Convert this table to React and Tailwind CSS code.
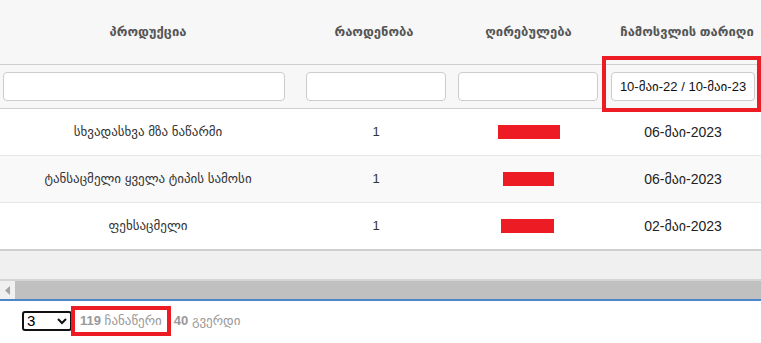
import React from 'react';

const FONT = { fontFamily: '"Liberation Sans", "DejaVu Sans", Arial, sans-serif' };

const rows = [
  { name: 'სხვადასხვა მზა ნაწარმი', qty: 1, date: '06-მაი-2023', bar: 'w-[62px]', bg: 'bg-white' },
  { name: 'ტანსაცმელი ყველა ტიპის სამოსი', qty: 1, date: '06-მაი-2023', bar: 'w-[51px]', bg: 'bg-[#f9f9f9]' },
  { name: 'ფეხსაცმელი', qty: 1, date: '02-მაი-2023', bar: 'w-[53px] ml-[-2px]', bg: 'bg-white' },
];

export default function App() {
  return (
    <div className="w-[761px] h-[343px] bg-white overflow-hidden text-[13px]" style={FONT}>
      {/* header */}
      <div className="flex h-[65px] bg-[#f7f7f7] border-b border-[#d0d0d0] font-bold text-[#555] text-[13px]">
        <div className="w-[296px] flex items-center justify-center">პროდუქცია</div>
        <div className="w-[156px] flex items-center justify-center">რაოდენობა</div>
        <div className="w-[153px] flex items-center justify-center">ღირებულება</div>
        <div className="w-[156px] flex items-center justify-center pl-[8px]">ჩამოსვლის თარიღი</div>
      </div>

      {/* filters */}
      <div className="flex h-[44px] bg-[#f7f7f7] border-b border-[#d0d0d0] items-center">
        <div className="w-[296px] pl-[3px] pr-[11px]">
          <div className="h-[29px] bg-white border border-[#cccccc] rounded-[4px]" />
        </div>
        <div className="w-[156px] pl-[10px] pr-[6px]">
          <div className="h-[29px] bg-white border border-[#cccccc] rounded-[4px]" />
        </div>
        <div className="w-[153px] pl-[6px] pr-[7px]">
          <div className="h-[29px] bg-white border border-[#cccccc] rounded-[4px]" />
        </div>
        <div className="relative w-[156px] h-full flex items-center pl-[6px] pr-[6px]">
          <div className="w-full h-[29px] bg-white border border-[#cccccc] rounded-[4px] flex items-center justify-center text-[13px] text-[#111]">
            10-მაი-22 / 10-მაი-23
          </div>
          <div className="absolute left-[-3px] top-[-9px] right-0 bottom-[-4px] border-[4px] border-[#ed1c24]" />
        </div>
      </div>

      {/* rows */}
      {rows.map((r, i) => (
        <div key={i} className={`flex h-[47px] items-center border-b border-[#e6e6e6] text-[#333] ${r.bg}`}>
          <div className="w-[296px] text-center">{r.name}</div>
          <div className="w-[156px] text-center pl-[4px]">{r.qty}</div>
          <div className="w-[153px] flex justify-center">
            <div className={`h-[14px] bg-[#ed1c24] ${r.bar}`} />
          </div>
          <div className="w-[156px] text-center text-[14px] text-[#222]">{r.date}</div>
        </div>
      ))}

      {/* empty grey area */}
      <div className="h-[32px] bg-[#f0f0f0] border-t-2 border-[#cfcfcf] border-b-2 border-b-[#d4d4d4] mt-[-1px]" />

      {/* scrollbar */}
      <div className="flex h-[20px] bg-[#f0f0f0] border-b-2 border-[#4a86c8]">
        <div className="w-[15px] flex items-center justify-center">
          <svg width="6" height="9" viewBox="0 0 6 9"><path d="M5 0 L0 4.5 L5 9 Z" fill="#a3a3a3" /></svg>
        </div>
        <div className="flex-1 bg-[#c0c0c0]" />
      </div>

      {/* footer */}
      <div className="flex items-center h-[40px] pl-[22px] text-[13px]">
        <div className="w-[50px] h-[20px] border-2 border-[#111] rounded-[3px] flex items-center justify-between px-[3px] text-[15px] text-black">
          <span>3</span>
          <svg width="10" height="7" viewBox="0 0 10 7"><path d="M1 1 L5 5 L9 1" stroke="#111" strokeWidth="2" fill="none" /></svg>
        </div>
        <span className="ml-[-1px] h-[30px] px-[5px] border-[4px] border-[#ed1c24] flex items-center text-[#999]">
          <b className="text-[#999]">119</b>&nbsp;ჩანაწერი
        </span>
        <span className="ml-[3px] text-[#999]">
          <b>40</b> გვერდი
        </span>
      </div>
    </div>
  );
}
